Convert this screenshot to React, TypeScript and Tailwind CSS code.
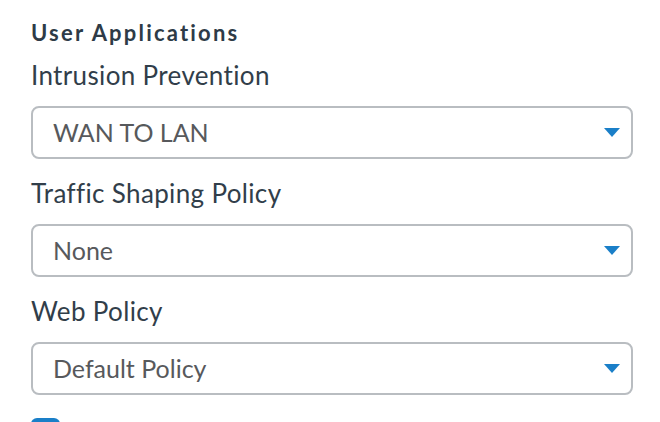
export default function App() {
  const fields = [
    { label: 'Intrusion Prevention', value: 'WAN TO LAN' },
    { label: 'Traffic Shaping Policy', value: 'None' },
    { label: 'Web Policy', value: 'Default Policy' },
  ]

  return (
    <div className="min-h-screen w-[660px] h-[422px] overflow-hidden bg-white pl-[31px] pr-[27px] pt-[21px] font-['Lato',sans-serif]">
      <h3 className="text-[22px] leading-[24px] font-bold tracking-[2.2px] text-[#2e3b47]">
        User Applications
      </h3>

      {fields.map((f, i) => (
        <div key={f.label} className={i === 0 ? 'mt-[15px]' : 'mt-[19px]'}>
          <label className="block text-[26px] leading-[30px] tracking-[0.35px] text-[#313e4a]">
            {f.label}
          </label>
          <div className="mt-[16px] h-[53px] rounded-[8px] border-2 border-[#b9bdc1] flex items-center justify-between pl-[20px] pr-[11px]">
            <span className="text-[25px] text-[#57595c]">{f.value}</span>
            <svg width="16" height="9" viewBox="0 0 16 9">
              <path d="M0 0 H16 L8 9 Z" fill="#1a7fc8" />
            </svg>
          </div>
        </div>
      ))}

      <div className="mt-[23px] w-[29px] h-[29px] rounded-[6px] bg-[#1a7fc8]" />
    </div>
  )
}
